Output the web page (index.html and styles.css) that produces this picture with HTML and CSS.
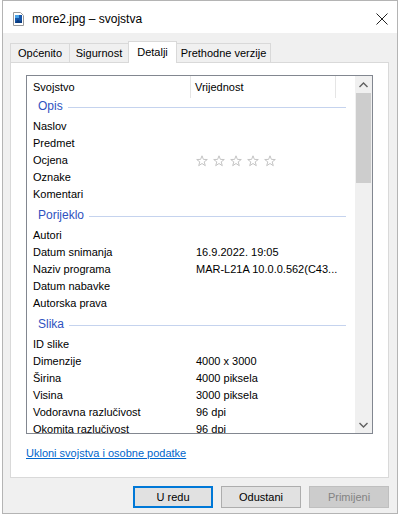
FILE: index.html
```html
<!DOCTYPE html>
<html lang="hr">
<head>
    <meta charset="UTF-8">
    <title>more2.jpg – svojstva</title>
    <link rel="stylesheet" href="styles.css">
</head>
<body>
    <div class="window">
        <div class="titlebar">
            <svg class="file-icon" width="11" height="14" viewBox="0 0 11 14">
                <path d="M0.5 0.5 H7.5 L10.5 3.5 V13.5 H0.5 Z" fill="#ffffff" stroke="#9a9a9a"/>
                <rect x="2" y="3" width="7" height="8" fill="#1656a8"/>
                <rect x="2" y="3" width="4" height="3" fill="#4aa3e8"/>
                <path d="M2 11 L5 7.5 L7 9.5 L9 8 V11 Z" fill="#0b3c80"/>
            </svg>
            <span class="title">more2.jpg – svojstva</span>
            <svg class="close" width="12" height="12" viewBox="0 0 12 12">
                <path d="M0.5 0.5 L11.5 11.5 M11.5 0.5 L0.5 11.5" stroke="#222" stroke-width="1"/>
            </svg>
        </div>

        <div class="content">
            <div class="tabs">
                <div class="tab" style="width: 60px">Općenito</div>
                <div class="tab" style="width: 60px">Sigurnost</div>
                <div class="tab active" style="width: 49px">Detalji</div>
                <div class="tab" style="width: 95px">Prethodne verzije</div>
            </div>

            <div class="panel">
                <div class="list">
                    <div class="list-main">
                        <div class="list-head">
                            <div class="col-name">Svojstvo</div>
                            <div class="col-value">Vrijednost</div>
                        </div>

                        <div class="group first"><span>Opis</span></div>
                        <div class="row"><div class="name">Naslov</div><div class="value"></div></div>
                        <div class="row"><div class="name">Predmet</div><div class="value"></div></div>
                        <div class="row">
                            <div class="name">Ocjena</div>
                            <div class="value stars">
                                <svg viewBox="0 0 12 12"><path d="M6 0.8 L7.4 4.4 L11.3 4.5 L8.2 6.9 L9.3 10.7 L6 8.5 L2.7 10.7 L3.8 6.9 L0.7 4.5 L4.6 4.4 Z"/></svg>
                                <svg viewBox="0 0 12 12"><path d="M6 0.8 L7.4 4.4 L11.3 4.5 L8.2 6.9 L9.3 10.7 L6 8.5 L2.7 10.7 L3.8 6.9 L0.7 4.5 L4.6 4.4 Z"/></svg>
                                <svg viewBox="0 0 12 12"><path d="M6 0.8 L7.4 4.4 L11.3 4.5 L8.2 6.9 L9.3 10.7 L6 8.5 L2.7 10.7 L3.8 6.9 L0.7 4.5 L4.6 4.4 Z"/></svg>
                                <svg viewBox="0 0 12 12"><path d="M6 0.8 L7.4 4.4 L11.3 4.5 L8.2 6.9 L9.3 10.7 L6 8.5 L2.7 10.7 L3.8 6.9 L0.7 4.5 L4.6 4.4 Z"/></svg>
                                <svg viewBox="0 0 12 12"><path d="M6 0.8 L7.4 4.4 L11.3 4.5 L8.2 6.9 L9.3 10.7 L6 8.5 L2.7 10.7 L3.8 6.9 L0.7 4.5 L4.6 4.4 Z"/></svg>
                            </div>
                        </div>
                        <div class="row"><div class="name">Oznake</div><div class="value"></div></div>
                        <div class="row"><div class="name">Komentari</div><div class="value"></div></div>

                        <div class="group"><span>Porijeklo</span></div>
                        <div class="row"><div class="name">Autori</div><div class="value"></div></div>
                        <div class="row"><div class="name">Datum snimanja</div><div class="value">16.9.2022. 19:05</div></div>
                        <div class="row"><div class="name">Naziv programa</div><div class="value">MAR-L21A 10.0.0.562(C43...</div></div>
                        <div class="row"><div class="name">Datum nabavke</div><div class="value"></div></div>
                        <div class="row"><div class="name">Autorska prava</div><div class="value"></div></div>

                        <div class="group"><span>Slika</span></div>
                        <div class="row"><div class="name">ID slike</div><div class="value"></div></div>
                        <div class="row"><div class="name">Dimenzije</div><div class="value">4000 x 3000</div></div>
                        <div class="row"><div class="name">Širina</div><div class="value">4000 piksela</div></div>
                        <div class="row"><div class="name">Visina</div><div class="value">3000 piksela</div></div>
                        <div class="row"><div class="name">Vodoravna razlučivost</div><div class="value">96 dpi</div></div>
                        <div class="row"><div class="name">Okomita razlučivost</div><div class="value">96 dpi</div></div>
                    </div>

                    <div class="scrollbar">
                        <div class="arrow">
                            <svg width="9" height="6" viewBox="0 0 9 6"><path d="M0.5 5 L4.5 1 L8.5 5" fill="none" stroke="#606060" stroke-width="1.4"/></svg>
                        </div>
                        <div class="track"><div class="thumb"></div></div>
                        <div class="arrow">
                            <svg width="9" height="6" viewBox="0 0 9 6"><path d="M0.5 1 L4.5 5 L8.5 1" fill="none" stroke="#606060" stroke-width="1.4"/></svg>
                        </div>
                    </div>
                </div>

                <a class="link" href="#">Ukloni svojstva i osobne podatke</a>
            </div>

            <div class="buttons">
                <button class="btn default">U redu</button>
                <button class="btn">Odustani</button>
                <button class="btn disabled">Primijeni</button>
            </div>
        </div>
    </div>
</body>
</html>
```

FILE: styles.css
```css
/* Prozor svojstava */
* {
    box-sizing: border-box;
}

body {
    margin: 0;
    padding: 0;
    background-color: #ffffff;
    font-family: 'Liberation Sans', Arial, sans-serif;
    font-size: 11px;
    color: #000;
}

.window {
    width: 396px;
    height: 514px;
    margin-left: 2px;
    border: 1px solid #b4b4b4;
    background-color: #f0f0f0;
    display: flex;
    flex-direction: column;
}

.titlebar {
    height: 32px;
    background-color: #ffffff;
    display: flex;
    align-items: center;
    padding: 4px 0 0 10px;
}

.file-icon {
    margin-right: 8px;
}

.title {
    font-size: 12px;
    flex: 1;
}

.close {
    margin-right: 9px;
}

.content {
    padding: 8px 8px 0 7px;
}

/* Kartice */
.tabs {
    display: flex;
    align-items: flex-end;
    height: 21px;
}

.tab {
    height: 19px;
    line-height: 18px;
    text-align: center;
    border: 1px solid #d9d9d9;
    border-bottom: none;
    margin-right: -1px;
    background-color: #f0f0f0;
}

.tab.active {
    height: 22px;
    line-height: 20px;
    margin-bottom: -1px;
    background-color: #ffffff;
    position: relative;
    z-index: 1;
}

.panel {
    height: 416px;
    background-color: #ffffff;
    border: 1px solid #d9d9d9;
    padding: 12px 0 0 15px;
}

/* Popis svojstava */
.list {
    width: 347px;
    height: 359px;
    border: 1px solid #828790;
    display: flex;
    overflow: hidden;
}

.list-main {
    flex: 1;
    overflow: hidden;
}

.list-head {
    display: flex;
    height: 22px;
    line-height: 22px;
}

.col-name {
    width: 164px;
    padding-left: 6px;
    border-right: 1px solid #e5e5e5;
}

.col-value {
    width: 145px;
    padding-left: 4px;
    border-right: 1px solid #e5e5e5;
}

.group {
    height: 20px;
    margin-top: 4px;
    padding: 0 9px 0 11px;
    display: flex;
    align-items: center;
    padding-bottom: 4px;
    font-size: 12px;
    color: #2f52c0;
}

.group.first {
    margin-top: 0;
}

.group::after {
    content: "";
    flex: 1;
    height: 1px;
    margin: 2px 0 0 5px;
    background-color: #c5d3ee;
}

.row {
    display: flex;
    height: 17px;
    line-height: 17px;
    white-space: nowrap;
}

.row .name {
    width: 164px;
    padding-left: 6px;
}

.row .value {
    padding-left: 5px;
}

.stars {
    display: flex;
    align-items: center;
    gap: 5px;
    padding-top: 1px;
}

.stars svg {
    width: 12px;
    height: 12px;
    fill: none;
    stroke: #c4c4c4;
    stroke-width: 1;
}

/* Klizač */
.scrollbar {
    width: 17px;
    background-color: #f0f0f0;
    display: flex;
    flex-direction: column;
}

.arrow {
    height: 17px;
    display: flex;
    align-items: center;
    justify-content: center;
}

.track {
    flex: 1;
    padding: 0 1px;
}

.thumb {
    height: 90px;
    background-color: #cdcdcd;
}

.link {
    display: block;
    margin-top: 12px;
    color: #0066cc;
    text-decoration: underline;
    line-height: 15px;
    width: max-content;
}

/* Gumbi */
.buttons {
    display: flex;
    justify-content: flex-end;
    gap: 8px;
    margin-top: 8px;
}

.btn {
    width: 80px;
    height: 22px;
    font-family: 'Liberation Sans', Arial, sans-serif;
    font-size: 11px;
    color: #000;
    background-color: #e1e1e1;
    border: 1px solid #adadad;
    padding: 0;
}

.btn.default {
    border: 2px solid #0078d7;
}

.btn.disabled {
    background-color: #cccccc;
    border-color: #bfbfbf;
    color: #838383;
}
```
